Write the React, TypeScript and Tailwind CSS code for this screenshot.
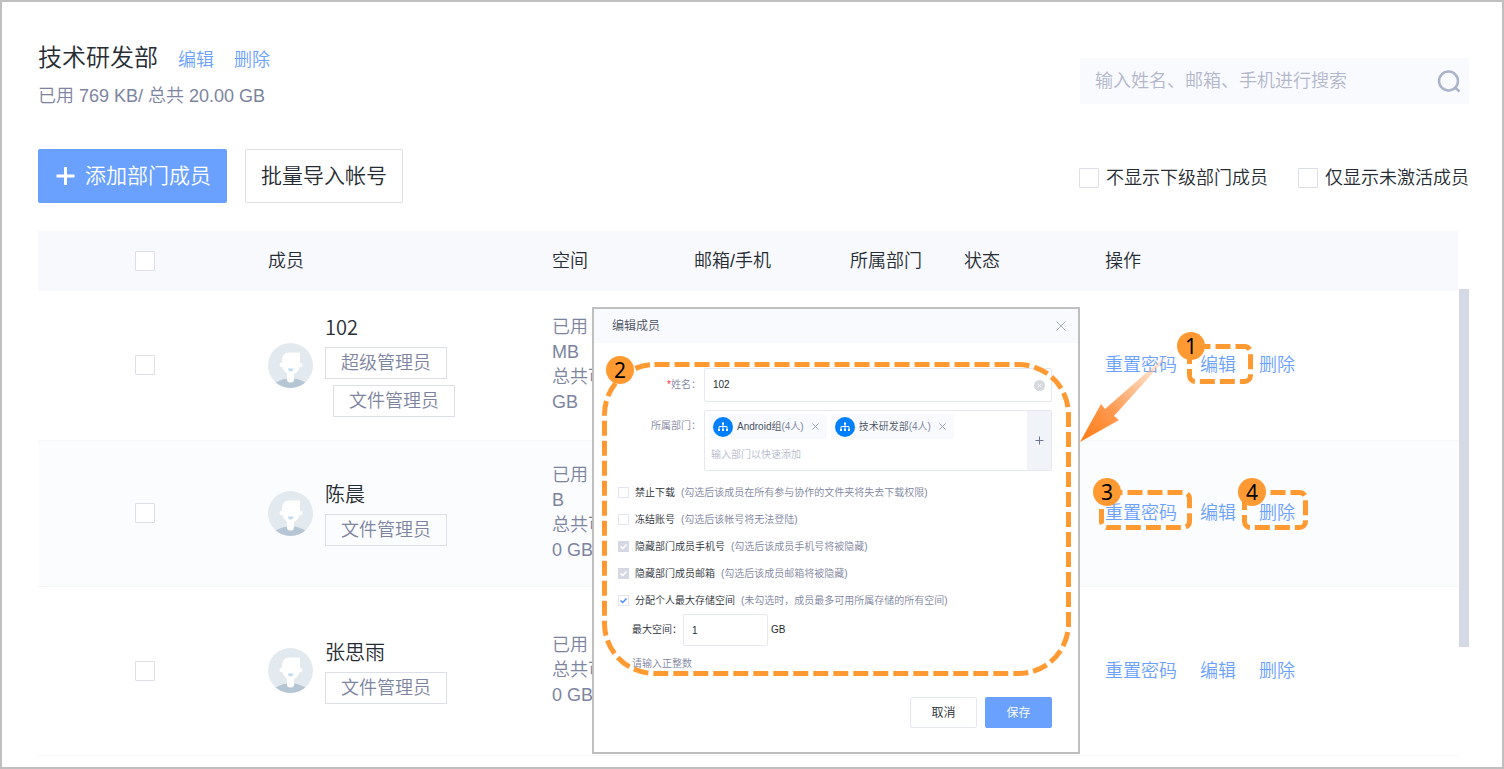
import { useState } from "react";
import type { ReactNode } from "react";

type Member = {
  id: string;
  name: string;
  roles: string[];
  space: string[];
  height: string;
};

const MEMBERS: Member[] = [
  { id: "102", name: "102", roles: ["超级管理员", "文件管理员"], space: ["已用", "MB", "总共可", "GB"], height: "h-[149px]" },
  { id: "chenchen", name: "陈晨", roles: ["文件管理员"], space: ["已用", "B", "总共可", "0 GB"], height: "h-[146px]" },
  { id: "zhangsiyu", name: "张思雨", roles: ["文件管理员"], space: ["已用", "总共可", "0 GB"], height: "h-[169px]" },
];

const COLUMNS = [
  { label: "成员", width: "w-[284px]" },
  { label: "空间", width: "w-[142px]" },
  { label: "邮箱/手机", width: "w-[156px]" },
  { label: "所属部门", width: "w-[114px]" },
  { label: "状态", width: "w-[141px]" },
  { label: "操作", width: "" },
];

const OPTIONS = [
  { id: "no-download", label: "禁止下载", hint: "(勾选后该成员在所有参与协作的文件夹将失去下载权限)" },
  { id: "freeze", label: "冻结账号", hint: "(勾选后该帐号将无法登陆)" },
  { id: "hide-phone", label: "隐藏部门成员手机号", hint: "(勾选后该成员手机号将被隐藏)", checked: true, disabled: true },
  { id: "hide-mail", label: "隐藏部门成员邮箱", hint: "(勾选后该成员邮箱将被隐藏)", checked: true, disabled: true },
  { id: "quota", label: "分配个人最大存储空间", hint: "(未勾选时，成员最多可用所属存储的所有空间)", checked: true },
];

function Avatar() {
  return (
    <svg width="45" height="45" viewBox="0 0 45 45" className="shrink-0" aria-hidden="true">
      <clipPath id="avatar-clip">
        <circle cx="22.5" cy="22.5" r="22.5" />
      </clipPath>
      <g clipPath="url(#avatar-clip)">
        <rect width="45" height="45" fill="#e2e9ef" />
        <ellipse cx="22.5" cy="44" rx="17" ry="8.5" fill="#b5c5d3" />
        <rect x="19" y="27" width="7" height="12.5" rx="3" fill="#fff" />
        <path d="M14 17c0-4 3-7.500 7-7.500h10c.6 0 1 .4 1 1V21c0 5.500-4 10.500-9 10.500s-9-5-9-10.500z" fill="#fff" />
        <ellipse cx="13.500" cy="22" rx="2" ry="2.300" fill="#fff" />
        <ellipse cx="32.500" cy="22" rx="2" ry="2.300" fill="#fff" />
        <path d="M20 25.500h5.500c0 1.800-1.200 3-2.800 3s-2.700-1.200-2.700-3z" fill="#c3dbee" />
      </g>
    </svg>
  );
}

function Checkbox({ label }: { label: string }) {
  return (
    <input
      type="checkbox"
      aria-label={label}
      className="block size-5 shrink-0 appearance-none rounded-[1px] border border-[#dcdfe8] bg-white checked:bg-[#6aa1ff]"
    />
  );
}

function Marker({ n, className }: { n: number; className: string }) {
  return (
    <span
      className={`absolute flex size-7 items-center justify-center rounded-full bg-[#ff9a33] font-['Noto_Sans',sans-serif] text-[21px] leading-none font-normal text-black ${className}`}
    >
      {n}
    </span>
  );
}

const HIGHLIGHTS = {
  1: { box: "-top-3 -left-[13px] w-[66px]", width: 61, marker: "-top-3 -left-2.5" },
  3: { box: "-top-3.5 -left-1.5 w-[93px]", width: 88, marker: "-top-3 -left-1.5" },
  4: { box: "-top-3.5 -left-[17px] w-[66px]", width: 61, marker: "-top-3 -left-1" },
};

// dashed highlight drawn around whatever it wraps
function Highlight({ n, children }: { n: 1 | 3 | 4; children: ReactNode }) {
  const h = HIGHLIGHTS[n];
  return (
    <span className="relative inline-block">
      {children}
      <span className={`pointer-events-none absolute h-10 ${h.box}`}>
        <svg width="100%" height="100%" className="block overflow-visible" aria-hidden="true">
          <rect
            x="2.5"
            y="2.5"
            width={h.width}
            height="35"
            rx="6"
            fill="none"
            stroke="#ff9a33"
            strokeWidth="5"
            strokeDasharray="15 5"
          />
        </svg>
        <Marker n={n} className={h.marker} />
      </span>
    </span>
  );
}

function Arrow() {
  return (
    <svg
      width="100"
      height="100"
      viewBox="0 0 100 100"
      className="pointer-events-none absolute -top-3 -left-[25px]"
      aria-hidden="true"
    >
      <defs>
        <linearGradient id="arrow-fade" gradientUnits="userSpaceOnUse" x1="0" y1="98" x2="98" y2="1">
          <stop offset="0" stopColor="#ff7a12" />
          <stop offset="0.35" stopColor="#ff9c55" />
          <stop offset="1" stopColor="#ffc79c" stopOpacity="0.1" />
        </linearGradient>
      </defs>
      <path d="M0 98 21 60l4 5L98 1 34 72l5 4z" fill="url(#arrow-fade)" />
    </svg>
  );
}

function Actions({ index }: { index: number }) {
  const link = "text-[#6aa1ff] hover:underline";
  const reset = <a href="#reset" className={link}>重置密码</a>;
  const edit = <a href="#edit" className={link}>编辑</a>;
  const remove = <a href="#delete" className={link}>删除</a>;

  return (
    <div className="relative flex gap-[23px] leading-[18px] whitespace-nowrap">
      {index === 1 ? <Highlight n={3}>{reset}</Highlight> : reset}
      {index === 0 && <Arrow />}
      {index === 0 ? <Highlight n={1}>{edit}</Highlight> : edit}
      {index === 1 ? <Highlight n={4}>{remove}</Highlight> : remove}
    </div>
  );
}

function MemberTable() {
  return (
    <div className="flex items-start">
      <table className="min-w-0 flex-1 table-fixed border-collapse text-lg text-[#7d84a0]">
        <thead>
          <tr className="h-[60px] bg-[#f8f9fd] text-[#262c33]">
            <th className="w-[214px]">
              <div className="flex justify-center"><Checkbox label="全选" /></div>
            </th>
            {COLUMNS.map((c) => (
              <th key={c.label} className={`px-4 text-left font-[350] ${c.width}`}>{c.label}</th>
            ))}
          </tr>
        </thead>
        <tbody>
          {MEMBERS.map((m, i) => (
            <tr key={m.id} className={`border-b border-[#f5f6f9] ${m.height} ${i % 2 ? "bg-[#fbfcfe]" : ""}`}>
              <td>
                <div className="flex justify-center"><Checkbox label={m.name} /></div>
              </td>
              <td className="px-4">
                <div className="flex items-center gap-3">
                  <Avatar />
                  <div className="flex flex-col items-start gap-1.5">
                    <p className="font-['Noto_Sans_CJK_SC',sans-serif] text-xl leading-7 text-[#262c33]">{m.name}</p>
                    {m.roles.map((role, r) => (
                      <span
                        key={role}
                        className={`border border-[#dcdfe8] px-[15px] leading-[30px] whitespace-nowrap ${r > 0 ? "ml-2" : ""}`}
                      >
                        {role}
                      </span>
                    ))}
                  </div>
                </div>
              </td>
              <td className="px-4 leading-[25px]">
                {m.space.map((line) => (
                  <p key={line} className="whitespace-nowrap">{line}</p>
                ))}
              </td>
              <td />
              <td />
              <td />
              <td className="px-4"><Actions index={i} /></td>
            </tr>
          ))}
        </tbody>
      </table>
      <div className="mt-[58px] ml-px h-[358px] w-2.5 bg-[#d5d9e5]" />
    </div>
  );
}

function DeptTag({ name, onRemove }: { name: string; onRemove: () => void }) {
  return (
    <span className="flex h-[25px] items-center bg-[#f8fafe] pr-2 pl-1 text-[#4a5060]">
      <svg width="20" height="20" viewBox="0 0 20 20" className="mr-1" aria-hidden="true">
        <circle cx="10" cy="10" r="10" fill="#0080ff" />
        <path d="M10 7v5M6 12.500v-3h8v3" fill="none" stroke="#fff" strokeWidth="1" />
        <path d="M9 5.500h2v2H9zM5 12h2v2H5zM9 12h2v2H9zM13 12h2v2h-2z" fill="#fff" />
      </svg>
      {name}
      <span className="text-[#7d84a0]">(4人)</span>
      <button type="button" aria-label={`移除${name}`} onClick={onRemove} className="ml-2">
        <svg width="7" height="7" viewBox="0 0 7 7" aria-hidden="true">
          <path d="M.5.5l6 6M6.500.5l-6 6" stroke="#9aa0b8" />
        </svg>
      </button>
    </span>
  );
}

function OptionRow({ option }: { option: (typeof OPTIONS)[number] }) {
  return (
    <label htmlFor={option.id} className="flex h-[27px] items-center text-[#262c33]">
      <span className="mr-1.5 grid size-[11px] place-items-center">
        <input
          id={option.id}
          type="checkbox"
          defaultChecked={option.checked}
          disabled={option.disabled}
          className="peer col-start-1 row-start-1 size-[11px] appearance-none border border-[#e4e6ef] bg-white disabled:border-[#d5d8e3] disabled:bg-[#d5d8e3]"
        />
        <svg
          width="9"
          height="9"
          viewBox="0 0 9 9"
          aria-hidden="true"
          className="pointer-events-none invisible col-start-1 row-start-1 text-[#4a8dff] peer-checked:visible peer-disabled:text-white"
        >
          <path d="M1.500 4.500 3.700 6.500 7.500 2.500" fill="none" stroke="currentColor" strokeWidth="1.500" />
        </svg>
      </span>
      {option.label}
      <span className="ml-1.5 text-[#7d84a0]">{option.hint}</span>
    </label>
  );
}

function EditDialog() {
  const [depts, setDepts] = useState(["Android组", "技术研发部"]);

  return (
    <div
      role="dialog"
      aria-labelledby="dialog-title"
      className="absolute top-[305px] left-[590px] w-[488px] border-2 border-[#bfbfbf] bg-white text-[10px] leading-4"
    >
      <div className="flex h-[34px] items-center justify-between bg-[#f9fafe] pr-3 pl-[18px]">
        <h2 id="dialog-title" className="text-xs text-[#4a5060]">编辑成员</h2>
        <button type="button" aria-label="关闭">
          <svg width="10" height="10" viewBox="0 0 10 10" aria-hidden="true">
            <path d="M.5.5l9 9M9.500.5l-9 9" stroke="#aab0c6" />
          </svg>
        </button>
      </div>

      <div className="pt-[25px] pr-[26px] pb-6 pl-6">
        <div className="flex items-center">
          <label htmlFor="member-name" className="w-[83px] text-right text-[#7d84a0]">
            <span className="text-red-500">*</span>姓名：
          </label>
          <div className="ml-[3px] flex h-[34px] flex-1 items-center rounded-xs border border-[#e6e8f0] pr-1.5 pl-2">
            <input
              id="member-name"
              defaultValue="102"
              className="min-w-0 flex-1 text-[#262c33] outline-none"
            />
            <button type="button" aria-label="清空">
              <svg width="11" height="11" viewBox="0 0 11 11" aria-hidden="true">
                <circle cx="5.500" cy="5.500" r="5.500" fill="#d5d9dd" />
                <path d="M3.500 3.500l4 4M7.500 3.500l-4 4" stroke="#f3f4f6" />
              </svg>
            </button>
          </div>
        </div>

        <div className="mt-2 flex items-start">
          <label htmlFor="member-dept" className="mt-2 w-[83px] text-right text-[#7d84a0]">所属部门：</label>
          <div className="ml-[3px] flex h-[61px] flex-1 rounded-xs border border-[#e6e8f0]">
            <div className="min-w-0 flex-1 pt-[3px] pl-1">
              <div className="flex gap-1">
                {depts.map((d) => (
                  <DeptTag key={d} name={d} onRemove={() => setDepts(depts.filter((x) => x !== d))} />
                ))}
              </div>
              <input
                id="member-dept"
                placeholder="输入部门以快速添加"
                className="mt-2 block w-full pl-0.5 outline-none placeholder:text-[#b2b7cc]"
              />
            </div>
            <button type="button" aria-label="添加部门" className="flex w-6 items-center justify-center bg-[#f2f3f9]">
              <svg width="9" height="9" viewBox="0 0 9 9" aria-hidden="true">
                <path d="M4.500.5v8M.5 4.500h8" stroke="#6d7490" />
              </svg>
            </button>
          </div>
        </div>

        <div className="mt-2">
          {OPTIONS.map((o) => (
            <OptionRow key={o.id} option={o} />
          ))}
        </div>

        <div className="ml-3.5 flex items-center text-[#262c33]">
          <label htmlFor="max-space">最大空间：</label>
          <input
            id="max-space"
            defaultValue="1"
            className="mr-[3px] ml-px h-8 w-[85px] rounded-xs border border-[#e6e8f0] px-2 outline-none"
          />
          GB
        </div>
        <p className="mt-2.5 ml-3.5 text-[#7d84a0]">请输入正整数</p>

        <div className="mt-[25px] flex justify-end gap-2">
          <button type="button" className="h-[31px] w-[67px] rounded-xs border border-[#e6e8f0] text-xs text-[#262c33]">
            取消
          </button>
          <button type="button" className="h-[31px] w-[67px] rounded-xs bg-[#6aa1ff] text-xs text-white">
            保存
          </button>
        </div>
      </div>

      <div className="pointer-events-none absolute top-[53px] left-2 h-[314px] w-[469px]">
        <svg width="469" height="314" className="block overflow-visible" aria-hidden="true">
          <rect
            x="2.5"
            y="2.5"
            width="464"
            height="309"
            rx="50"
            fill="none"
            stroke="#ff9a33"
            strokeWidth="5"
            strokeDasharray="15 5"
          />
        </svg>
        <Marker n={2} className="-top-1.5 left-1" />
      </div>
    </div>
  );
}

export default function App() {
  return (
    <main className="relative min-h-screen overflow-hidden border-2 border-[#bfbfbf] bg-white pt-10 pr-[33px] pl-9 font-['Liberation_Sans','Noto_Sans_CJK_SC',sans-serif] font-[350] text-[#262c33]">
      <header className="flex items-start justify-between">
        <div>
          <div className="flex items-baseline gap-5 text-lg leading-8">
            <h1 className="text-2xl leading-8">技术研发部</h1>
            <a href="#edit-dept" className="text-[#6aa1ff]">编辑</a>
            <a href="#delete-dept" className="text-[#6aa1ff]">删除</a>
          </div>
          <p className="mt-1.5 text-lg leading-7 text-[#7d84a0]">已用 769 KB/ 总共 20.00 GB</p>
        </div>
        <form role="search" className="mt-4 flex h-[46px] w-[389px] items-center rounded-xs bg-[#f9fafe] pr-2 pl-[15px]">
          <input
            type="text"
            aria-label="搜索成员"
            placeholder="输入姓名、邮箱、手机进行搜索"
            className="min-w-0 flex-1 text-lg outline-none placeholder:text-[#b2b7cc]"
          />
          <button type="button" aria-label="搜索">
            <svg width="24" height="24" viewBox="0 0 24 24" fill="none" stroke="#aab3c9" strokeWidth="2.500" aria-hidden="true">
              <circle cx="11.500" cy="12" r="9.500" />
              <path d="M18 18.500l4.500 4" />
            </svg>
          </button>
        </form>
      </header>

      <div className="mt-[39px] mb-7 flex items-center justify-between">
        <div className="flex gap-[18px] text-[21px]">
          <button type="button" className="flex h-[54px] items-center gap-2.5 rounded-xs bg-[#6aa1ff] pr-4 pl-[17px] text-white">
            <svg width="20" height="20" viewBox="0 0 20 20" aria-hidden="true">
              <path d="M10.500 1v18M1.500 10h18" stroke="#fff" strokeWidth="3" />
            </svg>
            添加部门成员
          </button>
          <button type="button" className="h-[54px] rounded-xs border border-[#dcdfe8] px-[15px]">
            批量导入帐号
          </button>
        </div>
        <div className="mt-1 flex gap-[30px] text-lg">
          <label className="flex items-center gap-[7px]"><Checkbox label="不显示下级部门成员" />不显示下级部门成员</label>
          <label className="flex items-center gap-[7px]"><Checkbox label="仅显示未激活成员" />仅显示未激活成员</label>
        </div>
      </div>

      <MemberTable />
      <EditDialog />
    </main>
  );
}
